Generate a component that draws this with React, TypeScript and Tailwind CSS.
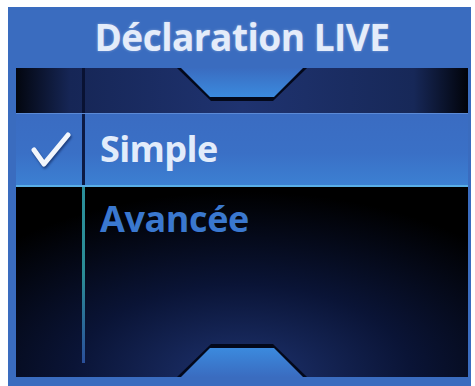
// top / bottom tabs of the screen frame
function Notch({ flip = false }: { flip?: boolean }) {
  return (
    <svg
      width="130"
      height="34"
      viewBox="0 0 130 34"
      className={flip ? 'absolute bottom-0 left-1/2 -translate-x-1/2 rotate-180' : 'absolute top-0 left-1/2 -translate-x-1/2'}
    >
      <defs>
        <linearGradient id={flip ? 'nb' : 'nt'} x1="0" y1="0" x2="0" y2="1">
          <stop offset="0" stopColor="#3a6cc0" />
          <stop offset="1" stopColor="#3b8ade" />
        </linearGradient>
      </defs>
      <path d="M0 0 L34 33 L96 33 L130 0 Z" fill="#03081a" />
      <path d="M4 0 L33 29 L97 29 L126 0 Z" fill={`url(#${flip ? 'nb' : 'nt'})`} />
    </svg>
  );
}

function Tick() {
  return (
    <svg width="42" height="38" viewBox="0 0 42 38" className="drop-shadow-[1px_2px_1px_rgba(10,30,80,0.6)]">
      <path d="M4 19 L14 33 L38 4" fill="none" stroke="#f2f6fc" strokeWidth="5" strokeLinecap="round" strokeLinejoin="round" />
    </svg>
  );
}

export default function App() {
  return (
    <div className="h-[386px] w-[475px] bg-white pt-[7px] pr-[4px] pl-[8px]" style={{ fontFamily: '"Open Sans", "Noto Sans", sans-serif' }}>
      <div className="flex h-full flex-col bg-[#3a6cbf] pr-[3px] pl-[8px]">
        <div className="flex h-[61px] items-center justify-center pb-[2px]">
          <h1 className="text-[37px] leading-none font-bold tracking-[-0.5px] text-[#e4ecfa] [text-shadow:0_0_3px_rgba(255,255,255,0.35)]">
            Déclaration LIVE
          </h1>
        </div>

        <div className="relative flex flex-1 flex-col overflow-hidden bg-[radial-gradient(ellipse_75%_60%_at_50%_100%,#1e3370_0%,#0a1436_50%,#000000_100%)]">
          {/* top strip */}
          <div className="flex h-[45px] bg-[linear-gradient(90deg,#03060f_0%,#162656_12%,#1f3370_50%,#172858_88%,#01030a_100%)]">
            <div className="w-[66px]" />
            <div className="w-[3px] bg-[#091233]" />
            <div className="flex-1" />
          </div>

          {/* selected row */}
          <div className="flex h-[74px] border-t border-[#5b8ad6] border-b-2 border-b-[#59aee6] bg-[linear-gradient(180deg,#3a6cc2_0%,#3a70c6_55%,#3c80d2_100%)]">
            <div className="flex w-[66px] items-center justify-center pl-[4px]">
              <Tick />
            </div>
            <div className="w-[3px] bg-[#0c1a44]" />
            <div className="flex flex-1 items-center pl-[15px] pb-[2px]">
              <span className="text-[36px] leading-none font-bold tracking-[-0.6px] text-[#e2ecfb]">Simple</span>
            </div>
          </div>

          {/* remaining */}
          <div className="flex flex-1 pb-[14px]">
            <div className="w-[66px]" />
            <div className="w-[3px] bg-[linear-gradient(180deg,#2a8f9a_0%,#2b8c96_50%,#2a4f9a_100%)]" />
            <div className="flex-1 pt-[14px] pl-[15px]">
              <span className="text-[36px] leading-none font-bold tracking-[-0.4px] text-[#3a78cf]">Avancée</span>
            </div>
          </div>

          <Notch />
          <Notch flip />
        </div>
        <div className="h-[9px]" />
      </div>
    </div>
  );
}
